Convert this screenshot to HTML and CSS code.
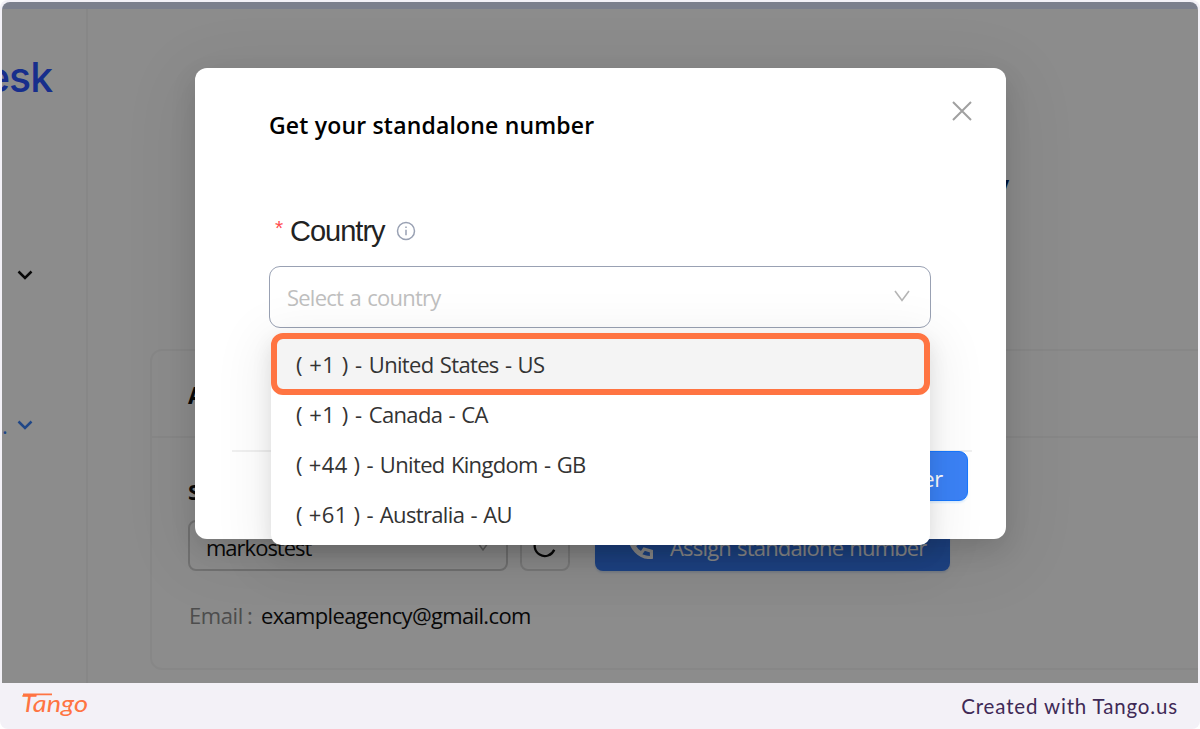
FILE: index.html
```html
<!DOCTYPE html>
<html lang="en">
<head>
<meta charset="utf-8">
<title>Get your standalone number</title>
<link rel="stylesheet" href="styles.css">
</head>
<body>
<div class="frame">
  <div class="shot">
    <div class="topbar"></div>
    <div class="app">
      <aside class="sidebar">
        <div class="brand">esk</div>
        <div class="nav-row"><svg class="chev" viewBox="0 0 16 10"><path d="M1.500 1.500 8 8l6.500-6.500"/></svg></div>
        <div class="nav-row active"><span class="dots">.</span><svg class="chev" viewBox="0 0 16 10"><path d="M1.500 1.500 8 8l6.500-6.500"/></svg></div>
      </aside>
      <main class="main">
        <div class="headline">y</div>
        <section class="card">
          <div class="card-title">A</div>
          <div class="card-body">
            <div class="sub">S</div>
            <div class="controls">
              <div class="account"><span class="t-account">markostest</span><svg class="mini" viewBox="0 0 12 10"><path d="M1 1l5 7 5-7"/></svg></div>
              <div class="refresh"><svg viewBox="0 0 26 26"><path d="M23 17A11 11 0 1 1 21 5.500M22 1v6h-6"/></svg></div>
              <div class="assign"><svg viewBox="0 0 24 24"><path d="M1.500 1.500h6l2 7-3.700 2.800a16 16 0 0 0 7 7l2.700-3.800 7 2v6C11 23.500 1.500 13 1.500 1.500Z"/></svg><span class="t-assign">Assign standalone number</span></div>
            </div>
            <div class="email"><span class="email-label">Email</span><span class="colon">:</span><span class="t-email">exampleagency@gmail.com</span></div>
          </div>
        </section>
      </main>
    </div>
    <div class="mask"></div>
    <div class="modal">
      <div class="modal-head"><h1 class="title">Get your standalone number</h1><svg class="close" viewBox="0 0 20 20"><path d="M1 1l18 18M19 1 1 19"/></svg></div>
      <div class="label"><span class="star">*</span><span class="country">Country</span><svg class="info" viewBox="0 0 20 20"><circle cx="10" cy="10" r="8.500"/><path d="M10 8.700v5.500M10 5.500v1.500"/></svg></div>
      <div class="select"><span class="placeholder">Select a country</span><svg class="arrow" viewBox="0 0 16 12"><path d="M1 1l7 9.500L15 1"/></svg></div>
      <div class="modal-foot"><div class="submit">er</div></div>
    </div>
    <div class="menu">
      <div class="option picked"><span class="code">( +1 ) - </span><span class="place">United States - US</span></div>
      <div class="option"><span class="code">( +1 ) - </span><span class="place">Canada - CA</span></div>
      <div class="option"><span class="code long">( +44 ) - </span><span class="place">United Kingdom - GB</span></div>
      <div class="option"><span class="code long">( +61 ) - </span><span class="place">Australia - AU</span></div>
    </div>
    <div class="highlight"></div>
  </div>
  <footer class="footer">
    <svg class="tango" viewBox="0 0 72 40"><text x="1" y="25" textLength="67" lengthAdjust="spacingAndGlyphs">Tango</text><path d="M3 7.300H32"/></svg>
    <span class="credit">Created with Tango.us</span>
  </footer>
</div>
</body>
</html>
```

FILE: styles.css
```css
* { box-sizing: border-box; }
body { margin: 0; background: #fff; font-family: "Open Sans", "Noto Sans", sans-serif; font-size: 22px; color: #222; }
svg { display: block; fill: none; stroke: currentColor; flex: none; }
span { white-space: pre; }
.frame { width: 1200px; height: 729px; background: #f3f1f7; border-radius: 8px; padding: 2px 2px 0; overflow: hidden; display: flex; flex-direction: column; }
.shot { position: relative; height: 681px; overflow: hidden; border-radius: 8px 8px 0 0; background: #fff; display: flex; flex-direction: column; }
.topbar { height: 7px; background: #e0e7ff; flex: none; }
.app { flex: 1; display: flex; min-height: 0; }
.sidebar { width: 86px; border-right: 2px solid #f6f6f6; overflow: hidden; flex: none; }
.brand { margin: 43px 0 0 -16px; font: 500 41px/50px Inter, sans-serif; letter-spacing: -1px; color: #2a55ff; }
.nav-row { display: flex; align-items: center; height: 20px; padding-left: 15px; margin-top: 163px; color: #111; }
.nav-row.active { margin-top: 130px; padding-left: 0; color: #3b82f6; }
.dots { width: 15px; }
.chev { width: 16px; height: 10px; stroke-width: 2.500; }
.main { flex: 1; padding-left: 62px; overflow: hidden; }
.headline { height: 340px; padding: 157px 189px 0 0; text-align: right; font-size: 30px; font-weight: 700; line-height: 40px; color: #002766; }
.card { width: 1200px; height: 321px; border: 2px solid #f6f6f6; border-radius: 12px; }
.card-title { height: 87px; padding: 28px 36px 0; border-bottom: 2px solid #f6f6f6; font-weight: 700; font-size: 23px; line-height: 32px; color: #111; }
.card-body { padding: 37px 36px; color: #111; }
.sub { font-weight: 700; line-height: 32px; }
.controls { display: flex; margin-top: 13px; height: 51px; }
.account { width: 320px; border: 2px solid #d0d0d0; border-radius: 8px; display: flex; align-items: center; justify-content: space-between; padding: 2px 17px 0 16px; }
.t-account { letter-spacing: -1px; }
.mini { width: 12px; height: 10px; color: #aaa; stroke-width: 1.500; }
.refresh { width: 50px; margin-left: 12px; border: 2px solid #dedede; border-radius: 8px; display: grid; place-items: center; }
.refresh svg { width: 24px; height: 24px; stroke-width: 2.500; }
.assign { width: 355px; margin-left: 25px; border-radius: 8px; background: #377af0; box-shadow: 0 2px 2px #dce6f5; color: #fff; display: flex; align-items: center; padding: 2px 22px 0 33px; gap: 17px; }
.assign svg { width: 25px; height: 25px; stroke-width: 3; }
.t-assign { letter-spacing: -.82px; word-spacing: 1.200px; }
.email { display: flex; margin-top: 29px; padding-left: 1px; line-height: 30px; }
.email-label { color: #8c8c8c; letter-spacing: -.4px; }
.colon { color: #8c8c8c; width: 18px; padding-left: 4px; }
.t-email { letter-spacing: -.65px; }
.mask { position: absolute; inset: 0; background: rgba(0,0,0,.45); }
.modal { position: absolute; left: 192.500px; top: 65.500px; width: 811px; height: 471.500px; background: #fff; border-radius: 12px; box-shadow: 0 10px 26px rgba(0,0,0,.12), 0 14px 70px 10px rgba(0,0,0,.07); padding: 33.500px 33.500px 0 37.500px; }
.modal-head { display: flex; justify-content: space-between; padding-left: 37px; }
.title { margin: 7.500px 0 0; font-size: 23px; line-height: 32px; font-weight: 600; letter-spacing: .18px; color: #000; white-space: nowrap; }
.close { width: 20px; height: 20px; color: #a0a0a0; stroke-width: 2; }
.label { display: flex; align-items: center; height: 36px; margin: 72.500px 0 0 43px; }
.star { width: 15px; height: 36px; color: #ff4d4f; font: 21px/30px "Liberation Sans", sans-serif; }
.country { font: 29px/36px "Liberation Sans", sans-serif; letter-spacing: -1px; color: #222; width: 106px; }
.info { width: 20px; height: 20px; color: #99a1b3; stroke-width: 1.500; }
.select { margin: 17px 0 0 37px; width: 662px; height: 62px; border: 1px solid #99a1b3; border-radius: 11px; display: flex; align-items: center; justify-content: space-between; padding: 0 20px 0 17px; }
.placeholder { color: #bfbfbf; letter-spacing: -.78px; word-spacing: 1.500px; }
.arrow { width: 16px; height: 12px; margin-top: -2px; color: #b5b5b5; stroke-width: 1.600; }
.modal-foot { margin-top: 122px; border-top: 2px solid #f0f0f0; display: flex; justify-content: flex-end; padding-right: 4px; }
.submit { width: 200px; height: 50px; margin-top: -1px; background: #3b82f6; border: 1px solid #1677ff; border-radius: 9px; color: #fff; text-align: right; padding-right: 24px; line-height: 52px; letter-spacing: -.3px; box-shadow: 0 2px 2px #e0f0ff; }
.menu { position: absolute; left: 269px; top: 332px; width: 659px; height: 211px; padding: 5px 6px 0; background: #fff; border-radius: 10px; box-shadow: 0 8px 20px rgba(0,0,0,.1), 0 10px 50px 14px rgba(0,0,0,.06); }
.option { height: 50px; padding-left: 19px; line-height: 50px; color: #333; }
.code { letter-spacing: .52px; }
.code.long { letter-spacing: .32px; }
.place { letter-spacing: -.66px; word-spacing: 1.200px; }
.picked { background: #f4f4f4; }
.highlight { position: absolute; left: 269px; top: 331px; width: 659px; height: 62px; border: 6px solid #ff7442; border-radius: 12px; }
.footer { flex: 1; display: flex; align-items: center; justify-content: space-between; padding: 0 20px 0 18px; }
.tango { width: 72px; height: 40px; margin-top: 2px; stroke-width: 1.700; color: #ff7442; }
.tango text { font: italic 400 24px Lato, sans-serif; fill: #ff7442; stroke: none; }
.credit { font: 20.500px/30px Lato, sans-serif; letter-spacing: .84px; color: #3f2a56; margin-top: -1px; }
```
